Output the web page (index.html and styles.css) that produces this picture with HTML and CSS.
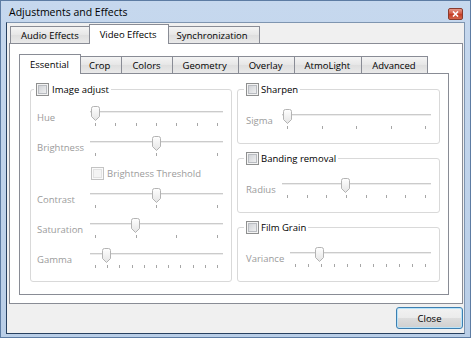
FILE: index.html
```html
<!DOCTYPE html>
<html lang="en">
<head>
  <meta charset="UTF-8" />
  <title>Adjustments and Effects</title>
  <link rel="stylesheet" href="styles.css">
</head>
<body>
  <svg width="0" height="0" class="defs">
    <defs>
      <linearGradient id="thumbFill" x1="0" y1="0" x2="0" y2="1">
        <stop offset="0" stop-color="#ffffff" />
        <stop offset="1" stop-color="#e4e4e4" />
      </linearGradient>
      <symbol id="thumb" viewBox="0 0 9 15">
        <path d="M0.5 2.5 Q0.5 0.5 2.5 0.5 H6.5 Q8.5 0.5 8.5 2.5 V10.5 L4.5 14.5 L0.5 10.5 Z" fill="url(#thumbFill)" stroke="#b3b3b3" />
      </symbol>
    </defs>
  </svg>

  <div class="window">
    <div class="titlebar">
      <span class="title">Adjustments and Effects</span>
      <span class="close-x">
        <svg width="7" height="6" viewBox="0 0 7 6"><path d="M1 0.5 L6 5.5 M6 0.5 L1 5.5" stroke="#fff" stroke-width="1.6" /></svg>
      </span>
    </div>

    <div class="client">
      <div class="tabs outer-tabs">
        <div class="tab">Audio Effects</div>
        <div class="tab active">Video Effects</div>
        <div class="tab">Synchronization</div>
      </div>

      <div class="pane outer-pane">
        <div class="tabs inner-tabs">
          <div class="tab active">Essential</div>
          <div class="tab">Crop</div>
          <div class="tab">Colors</div>
          <div class="tab">Geometry</div>
          <div class="tab">Overlay</div>
          <div class="tab">AtmoLight</div>
          <div class="tab">Advanced</div>
        </div>

        <div class="pane inner-pane">
          <fieldset class="group big">
            <legend><span class="check"></span>Image adjust</legend>
            <div class="rows">
              <span class="lbl">Hue</span>
              <div class="slider" style="--v:0">
                <div class="track"><svg class="thumb"><use href="#thumb" /></svg></div>
                <div class="ticks"><i></i><i></i><i></i><i></i><i></i><i></i><i></i></div>
              </div>

              <span class="lbl">Brightness</span>
              <div class="slider" style="--v:0.5">
                <div class="track"><svg class="thumb"><use href="#thumb" /></svg></div>
                <div class="ticks"><i></i><i></i><i></i></div>
              </div>

              <span></span>
              <div class="sub-check"><span class="check off"></span>Brightness Threshold</div>

              <span class="lbl">Contrast</span>
              <div class="slider" style="--v:0.5">
                <div class="track"><svg class="thumb"><use href="#thumb" /></svg></div>
                <div class="ticks"><i></i><i></i><i></i></div>
              </div>

              <span class="lbl">Saturation</span>
              <div class="slider" style="--v:0.33">
                <div class="track"><svg class="thumb"><use href="#thumb" /></svg></div>
                <div class="ticks"><i></i><i></i><i></i><i></i></div>
              </div>

              <span class="lbl">Gamma</span>
              <div class="slider" style="--v:0.09">
                <div class="track"><svg class="thumb"><use href="#thumb" /></svg></div>
                <div class="ticks"><i></i><i></i><i></i><i></i><i></i><i></i><i></i><i></i><i></i><i></i><i></i></div>
              </div>
            </div>
          </fieldset>

          <div class="side">
            <fieldset class="group small">
              <legend><span class="check"></span>Sharpen</legend>
              <div class="rows">
                <span class="lbl">Sigma</span>
                <div class="slider" style="--v:0">
                  <div class="track"><svg class="thumb"><use href="#thumb" /></svg></div>
                  <div class="ticks"><i></i><i></i><i></i><i></i><i></i></div>
                </div>
              </div>
            </fieldset>

            <fieldset class="group small">
              <legend><span class="check"></span>Banding removal</legend>
              <div class="rows">
                <span class="lbl">Radius</span>
                <div class="slider" style="--v:0.42">
                  <div class="track"><svg class="thumb"><use href="#thumb" /></svg></div>
                  <div class="ticks"><i></i><i></i><i></i><i></i><i></i><i></i><i></i><i></i></div>
                </div>
              </div>
            </fieldset>

            <fieldset class="group small">
              <legend><span class="check"></span>Film Grain</legend>
              <div class="rows">
                <span class="lbl">Variance</span>
                <div class="slider" style="--v:0.185">
                  <div class="track"><svg class="thumb"><use href="#thumb" /></svg></div>
                  <div class="ticks"><i></i><i></i><i></i><i></i><i></i><i></i><i></i><i></i><i></i><i></i><i></i></div>
                </div>
              </div>
            </fieldset>
          </div>
        </div>
      </div>

      <div class="footer">
        <button class="btn">Close</button>
      </div>
    </div>
  </div>
</body>
</html>
```

FILE: styles.css
```css
:root {
  --frame: #c0d3ea;
  --frame-edge: #5d7ca3;
  --face: #f0f0f0;
  --tab-border: #898c95;
  --group-border: #d9d9d9;
  --disabled: #9b9b9b;
  --tick: #a6a6a6;
}

* {
  box-sizing: border-box;
}

body {
  margin: 0;
  font-family: "Open Sans", sans-serif;
  font-size: 9.5px;
  color: #000;
  background: #fff;
}

.defs {
  position: absolute;
}

.window {
  width: 471px;
  height: 338px;
  display: flex;
  flex-direction: column;
  border: 1px solid var(--frame-edge);
  background: linear-gradient(to bottom, #c6d8ee, #b9cee7);
  padding: 0 5px 3px 5px;
}

/* Title bar */
.titlebar {
  height: 21px;
  display: flex;
  align-items: center;
  justify-content: space-between;
  padding: 1px 2px 0 3px;
}

.title {
  font-size: 10.5px;
  color: #000;
}

.close-x {
  width: 15px;
  height: 12px;
  margin-top: 3px;
  display: flex;
  align-items: center;
  justify-content: center;
  border: 1px solid #8a3b2e;
  border-radius: 2px;
  background: linear-gradient(to bottom, #e59a8b, #cf4f3a 50%, #c23a22 51%, #d3664c);
}

/* Client area */
.client {
  flex: 1;
  display: flex;
  flex-direction: column;
  background: var(--face);
  border: 1px solid #7f95b0;
  border-left-color: #27405f;
  border-bottom-color: #27405f;
}

.tabs {
  display: flex;
  align-items: flex-end;
  height: 20px;
  margin-bottom: -1px;
  position: relative;
  z-index: 1;
}

.outer-tabs {
  margin: 1px 0 -1px 3px;
}

.inner-tabs {
  padding-left: 2px;
}

.tab {
  height: 18px;
  display: flex;
  align-items: center;
  padding: 0 11px 0 10px;
  border: 1px solid var(--tab-border);
  margin-left: -1px;
  background: linear-gradient(to bottom, #f4f4f4, #e6e6e6 50%, #dedede 51%, #e9e9e9);
  white-space: nowrap;
}

.tab:first-child {
  margin-left: 0;
}

.tab.active {
  height: 20px;
  margin: 0 -2px;
  border-bottom: none;
  background: #fff;
  position: relative;
  z-index: 2;
}

.pane {
  background: #fff;
  border: 1px solid var(--tab-border);
}

.outer-pane {
  height: 261px;
  margin: 0 1px 0 2px;
  padding: 10px 13px 8px 9px;
}

.inner-pane {
  height: 222px;
  display: grid;
  grid-template-columns: 202px 203px;
  column-gap: 5px;
  padding: 8px 8px 12px 10px;
}

/* Group boxes */
.group {
  margin: 0;
  min-width: 0;
  border: 1px solid var(--group-border);
  border-radius: 3px;
}

.group legend {
  display: flex;
  align-items: center;
  gap: 3px;
  height: 14px;
  padding: 0 2px;
}

.group.big {
  padding: 8px 8px 9px 6px;
}

.group.big legend {
  margin-left: -3px;
}

.group.small {
  height: 62px;
  padding: 11px 8px 0 8px;
}

.group.small legend {
  margin-left: -2px;
  gap: 2px;
}

.side {
  display: flex;
  flex-direction: column;
  gap: 7px;
}

.rows {
  display: grid;
  grid-template-columns: 53px 1fr;
  grid-auto-rows: 26px;
  row-gap: 4px;
  align-items: center;
}

.rows .sub-check {
  height: 18px;
}

.big .rows {
  grid-template-rows: 26px 26px 18px 26px 26px 26px;
}

.small .rows {
  grid-template-columns: auto 1fr;
}

.small .lbl {
  min-width: 36px;
  padding-right: 6px;
}

.lbl {
  color: var(--disabled);
  white-space: nowrap;
}

.sub-check {
  display: flex;
  align-items: center;
  gap: 3px;
  padding-left: 1px;
  color: var(--disabled);
}

.check {
  width: 13px;
  height: 13px;
  flex: none;
  border: 1px solid #8e8f8f;
  background: linear-gradient(135deg, #c9ccd1, #f6f6f6);
  box-shadow: inset 0 0 0 1px #f3f3f3, inset 0 0 0 2px #b9bcc1;
}

.check.off {
  border-color: #c3c3c3;
  background: #f4f4f4;
  box-shadow: inset 0 0 0 1px #fafafa, inset 0 0 0 2px #e2e2e2;
}

/* Sliders */
.slider {
  height: 26px;
  align-self: start;
}

.track {
  position: relative;
  height: 2px;
  margin-top: 7px;
  border-top: 1px solid #cbcbcb;
  background: #ececec;
}

.thumb {
  position: absolute;
  top: -6px;
  left: calc(1px + var(--v) * (100% - 11px));
  width: 9px;
  height: 15px;
}

.ticks {
  display: flex;
  justify-content: space-between;
  padding: 0 5px;
  margin-top: 10px;
}

.ticks i {
  width: 1px;
  height: 3px;
  background: var(--tick);
}

/* Footer */
.footer {
  display: flex;
  justify-content: flex-end;
  padding: 3px 1px 4px 0;
}

.btn {
  width: 67px;
  height: 22px;
  font-family: inherit;
  font-size: 9.5px;
  color: #000;
  border: 1px solid #3c7fb1;
  border-radius: 3px;
  background: linear-gradient(to bottom, #f2f2f2, #ebebeb 50%, #dddddd 51%, #cfcfcf);
  box-shadow: inset 0 0 0 1px #b9e3f9;
  padding: 0;
}
```
